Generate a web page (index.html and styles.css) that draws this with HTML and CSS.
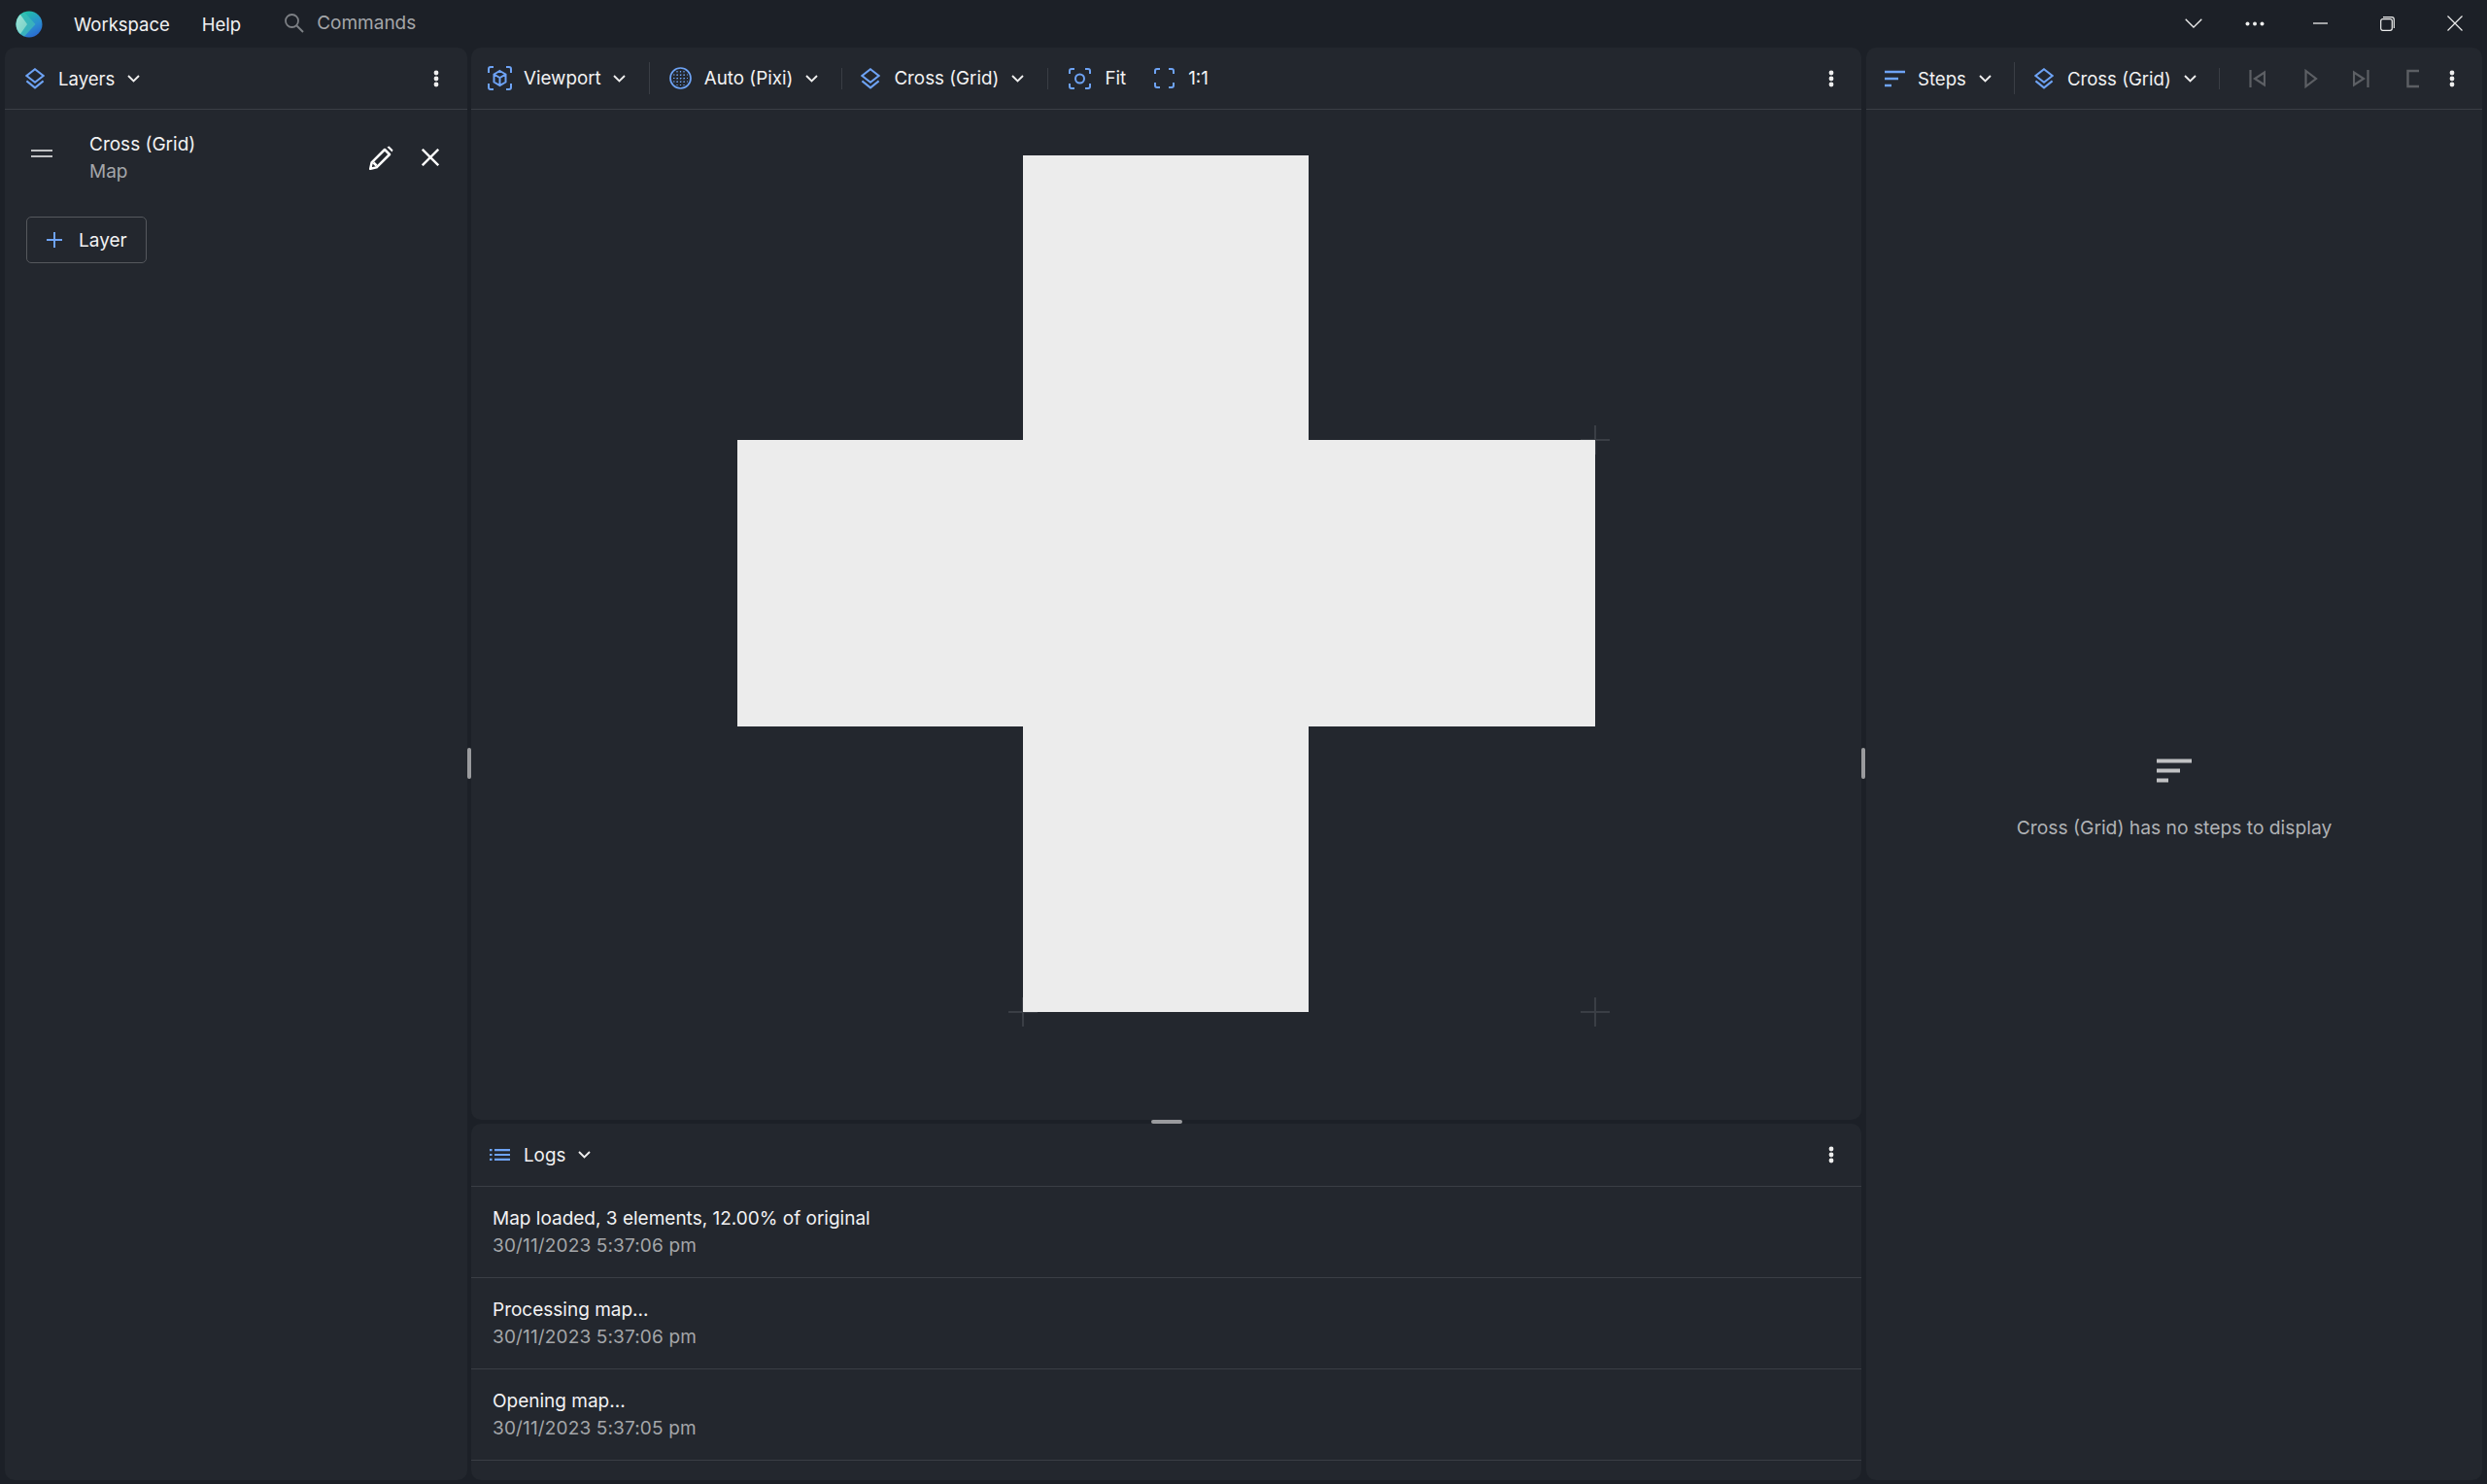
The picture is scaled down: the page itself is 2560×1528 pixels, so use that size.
FILE: index.html
```html
<!DOCTYPE html>
<html lang="en">

<head>
	<meta charset="UTF-8">
	<meta name="viewport" content="width=device-width, initial-scale=1.0">
	<title>Workspace</title>
	<link rel="stylesheet" href="styles.css">
</head>

<body>
	<svg class="defs" width="0" height="0">
		<defs>
			<symbol id="chev" viewBox="0 0 13 8"><path d="M1 1l5.500 5.500L12 1" fill="none" stroke="currentColor" stroke-width="1.900"/></symbol>
			<symbol id="kebab" viewBox="0 0 6 18"><circle cx="3" cy="3" r="2.400" fill="currentColor"/><circle cx="3" cy="9" r="2.400" fill="currentColor"/><circle cx="3" cy="15" r="2.400" fill="currentColor"/></symbol>
			<symbol id="layers" viewBox="0 0 20 22"><path d="M10 1.200L18.600 8 10 14.800 1.400 8z" fill="none" stroke="currentColor" stroke-width="2"/><path d="M1.400 13.400L10 20.400l8.600-7" fill="none" stroke="currentColor" stroke-width="2"/></symbol>
		</defs>
	</svg>

	<header class="titlebar">
		<svg class="logo" width="28" height="28" viewBox="0 0 28 28">
			<defs>
				<linearGradient id="logoBack" x1="0.3" y1="0" x2="0.9" y2="1"><stop offset="0" stop-color="#1fc4a4"/><stop offset="0.55" stop-color="#2a8fd0"/><stop offset="1" stop-color="#2a5fd0"/></linearGradient>
				<linearGradient id="logoMid" x1="0" y1="0" x2="1" y2="1"><stop offset="0" stop-color="#2fc6ae"/><stop offset="1" stop-color="#3fa6c4"/></linearGradient>
				<linearGradient id="logoFront" x1="0" y1="0" x2="1" y2="1"><stop offset="0" stop-color="#9fe3d6"/><stop offset="1" stop-color="#74d0c6"/></linearGradient>
			</defs>
			<circle cx="14" cy="14" r="13.500" fill="url(#logoBack)"/>
			<path d="M9 1.500L20.500 14 9 26.500A13.500 13.500 0 0 1 9 1.500z" fill="url(#logoMid)"/>
			<path d="M5 4L12 14 5 24A13.500 13.500 0 0 1 5 4z" fill="url(#logoFront)"/>
		</svg>
		<nav class="menu">
			<span>Workspace</span>
			<span>Help</span>
		</nav>
		<div class="search">
			<svg width="21" height="21" viewBox="0 0 21 21"><circle cx="8.500" cy="8.500" r="6.500" fill="none" stroke="currentColor" stroke-width="1.800"/><path d="M13.500 13.500L20 20" stroke="currentColor" stroke-width="2"/></svg>
			<span>Commands</span>
		</div>
		<div class="winctl">
			<svg class="w-chev" width="18" height="10" viewBox="0 0 18 10"><path d="M.7.700L9 9l8.300-8.300" fill="none" stroke="currentColor" stroke-width="1.300"/></svg>
			<svg class="w-dots" width="20" height="5" viewBox="0 0 20 5"><circle cx="2.500" cy="2.500" r="2" fill="currentColor"/><circle cx="10" cy="2.500" r="2" fill="currentColor"/><circle cx="17.500" cy="2.500" r="2" fill="currentColor"/></svg>
			<svg class="w-min" width="15" height="2" viewBox="0 0 15 2"><path d="M0 1h15" stroke="currentColor" stroke-width="1.300"/></svg>
			<svg class="w-max" width="15" height="15" viewBox="0 0 15 15"><rect x=".7" y="2.700" width="11.600" height="11.600" rx="2" fill="none" stroke="currentColor" stroke-width="1.200"/><path d="M3 .7h9a2.300 2.300 0 0 1 2.300 2.300v9" fill="none" stroke="currentColor" stroke-width="1.200"/></svg>
			<svg class="w-close" width="16" height="16" viewBox="0 0 16 16"><path d="M.5.500l15 15M15.500.5l-15 15" stroke="currentColor" stroke-width="1.200"/></svg>
		</div>
	</header>

	<main class="workspace">
		<section class="panel layers">
			<div class="panel-head">
				<div class="tool">
					<svg class="blue wide" width="20" height="22"><use href="#layers"/></svg>
					<span>Layers</span>
					<svg class="chev" width="13" height="8"><use href="#chev"/></svg>
				</div>
				<svg class="kebab" width="6" height="18"><use href="#kebab"/></svg>
			</div>
			<div class="layer-row">
				<svg class="grip" width="22" height="8" viewBox="0 0 22 8"><path d="M0 1h22M0 7h22" stroke="#c0c1c3" stroke-width="2"/></svg>
				<div class="layer-text">
					<div class="line">Cross (Grid)</div>
					<div class="line dim">Map</div>
				</div>
				<svg class="pencil" width="25" height="25" viewBox="0 0 25 25"><path d="M1.200 23.800l1.400-6.400L16 4l5 5L7.600 22.400z M4.500 17.500l3 3" fill="none" stroke="#fff" stroke-width="2.500" stroke-linejoin="round"/><path d="M18.500 1.500l2-1 4 4-1 2z" fill="#fff"/></svg>
				<svg class="close" width="18" height="18" viewBox="0 0 18 18"><path d="M.8.800l16.400 16.400M17.200.8L.8 17.200" stroke="#fff" stroke-width="2.400"/></svg>
			</div>
			<button class="add-layer" type="button">
				<svg width="16" height="16" viewBox="0 0 16 16"><path d="M8 0v16M0 8h16" stroke="#6ea3f5" stroke-width="2"/></svg>
				<span>Layer</span>
			</button>
		</section>

		<div class="center">
			<section class="panel viewport">
				<div class="panel-head">
					<div class="tool tight">
						<svg class="blue" width="25" height="25" viewBox="0 0 25 25" fill="none" stroke="currentColor" stroke-width="2"><path d="M1 7V3a2 2 0 0 1 2-2h3M19 1h3a2 2 0 0 1 2 2v4M24 18v4a2 2 0 0 1-2 2h-3M6 24H3a2 2 0 0 1-2-2v-4"/><path d="M12.500 5l6 3.500v8l-6 3.500-6-3.500v-8zM6.500 8.500l6 3.500 6-3.500M12.500 12v8"/></svg>
						<span>Viewport</span>
						<svg class="chev" width="13" height="8"><use href="#chev"/></svg>
					</div>
					<i class="sep tall"></i>
					<div class="tool">
						<svg class="blue" width="23" height="23" viewBox="0 0 23 23" fill="none" stroke="currentColor" stroke-width="1.700"><circle cx="11.500" cy="11.500" r="10.500"/><path d="M8 4v15M11.500 4v15M15 4v15M4 8h15M4 11.500h15M4 15h15" stroke-width="1.200" stroke-dasharray="1.500 2"/></svg>
						<span>Auto (Pixi)</span>
						<svg class="chev" width="13" height="8"><use href="#chev"/></svg>
					</div>
					<i class="sep"></i>
					<div class="tool">
						<svg class="blue wide" width="20" height="22"><use href="#layers"/></svg>
						<span>Cross (Grid)</span>
						<svg class="chev" width="13" height="8"><use href="#chev"/></svg>
					</div>
					<i class="sep"></i>
					<div class="tool fit">
						<svg class="blue wide" width="23" height="22" viewBox="0 0 23 22" fill="none" stroke="currentColor" stroke-width="2"><path d="M1 6V3a2 2 0 0 1 2-2h3M17 1h3a2 2 0 0 1 2 2v3M22 16v3a2 2 0 0 1-2 2h-3M6 21H3a2 2 0 0 1-2-2v-3"/><circle cx="11.500" cy="11" r="4.500"/></svg>
						<span>Fit</span>
					</div>
					<div class="tool actual">
						<svg class="blue wide" width="21" height="21" viewBox="0 0 21 21" fill="none" stroke="currentColor" stroke-width="2"><path d="M1 6V3a2 2 0 0 1 2-2h3M15 1h3a2 2 0 0 1 2 2v3M20 15v3a2 2 0 0 1-2 2h-3M6 20H3a2 2 0 0 1-2-2v-3"/></svg>
						<span>1:1</span>
					</div>
					<svg class="kebab" width="6" height="18"><use href="#kebab"/></svg>
				</div>
				<div class="canvas">
					<svg width="931" height="930" viewBox="0 0 931 930">
						<path d="M907 278v30M892 293h30M318 867v30M303 882h30M907 867v30M892 882h30" stroke="#3a3e45" stroke-width="2" fill="none"/>
						<path d="M318 0H612V293H907V588H612V882H318V588H24V293H318z" fill="#ececec"/>
					</svg>
				</div>
			</section>

			<section class="panel logs">
				<div class="panel-head">
					<div class="tool">
						<svg class="blue wide" width="21" height="12" viewBox="0 0 21 12"><path d="M5 1.200h16M5 6h16M5 10.800h16" stroke="currentColor" stroke-width="2.200"/><path d="M0 1.200h2.500M0 6h2.500M0 10.800h2.500" stroke="currentColor" stroke-width="2.200"/></svg>
						<span>Logs</span>
						<svg class="chev" width="13" height="8"><use href="#chev"/></svg>
					</div>
					<svg class="kebab" width="6" height="18"><use href="#kebab"/></svg>
				</div>
				<div class="log-row">
					<div class="line">Map loaded, 3 elements, 12.00% of original</div>
					<div class="line dim date">30/11/2023 5:37:06 pm</div>
				</div>
				<div class="log-row">
					<div class="line">Processing map...</div>
					<div class="line dim date">30/11/2023 5:37:06 pm</div>
				</div>
				<div class="log-row">
					<div class="line">Opening map...</div>
					<div class="line dim date">30/11/2023 5:37:05 pm</div>
				</div>
			</section>
		</div>

		<section class="panel steps">
			<div class="panel-head">
				<div class="tool">
					<svg class="blue" width="21" height="18" viewBox="0 0 21 18"><path d="M0 2h21M0 9h14M0 16h7" stroke="currentColor" stroke-width="2.600"/></svg>
					<span>Steps</span>
					<svg class="chev" width="13" height="8"><use href="#chev"/></svg>
				</div>
				<i class="sep tall"></i>
				<div class="tool">
					<svg class="blue wide" width="20" height="22"><use href="#layers"/></svg>
					<span>Cross (Grid)</span>
					<svg class="chev" width="13" height="8"><use href="#chev"/></svg>
				</div>
				<i class="sep"></i>
				<div class="media">
					<svg width="17" height="18" viewBox="0 0 17 18" fill="none" stroke="currentColor" stroke-width="2.200"><path d="M1.500 0v18M16 2.500v13L6 9z"/></svg>
					<svg class="m-play" width="14" height="20" viewBox="0 0 14 20" fill="none" stroke="currentColor" stroke-width="2.200"><path d="M1.500 2v16L12 10z"/></svg>
					<svg class="m-next" width="17" height="18" viewBox="0 0 17 18" fill="none" stroke="currentColor" stroke-width="2.200"><path d="M15.500 0v18M1 2.500v13L11 9z"/></svg>
					<svg class="m-stop" width="13" height="20" viewBox="0 0 13 20" fill="none" stroke="currentColor" stroke-width="2.400"><path d="M13 2H1.500v16H13"/></svg>
				</div>
				<svg class="kebab" width="6" height="18"><use href="#kebab"/></svg>
			</div>
			<div class="empty">
				<svg width="36" height="25" viewBox="0 0 36 25"><path d="M0 2.500h36M0 12.500h24M0 22.500h12" stroke="#c0c1c3" stroke-width="4"/></svg>
				<p>Cross (Grid) has no steps to display</p>
			</div>
		</section>

		<i class="handle handle-left"></i>
		<i class="handle handle-right"></i>
		<i class="handle handle-logs"></i>
	</main>
</body>

</html>
```

FILE: styles.css
```css
* {
	box-sizing: border-box;
}

html,
body {
	height: 100%;
}

body {
	margin: 0;
	display: flex;
	flex-direction: column;
	background-color: #1c2027;
	color: #f2f2f3;
	font-family: Inter, "Liberation Sans", sans-serif;
	font-size: 19px;
	overflow: hidden;
}

svg {
	display: block;
	flex: none;
}

.defs {
	position: absolute;
}

/* title bar */

.titlebar {
	height: 49px;
	flex: none;
	display: flex;
	align-items: center;
	padding-left: 16px;
}

.menu {
	display: flex;
	gap: 33px;
	margin-left: 32px;
	font-size: 18.5px;
}

.search {
	display: flex;
	align-items: center;
	gap: 13px;
	margin-left: 44px;
	margin-bottom: 2px;
	color: #7d8085;
}

.search span {
	color: #a4a6a9;
}

.winctl {
	margin-left: auto;
	display: flex;
	align-items: center;
	color: #eeeeee;
	padding-right: 25px;
	padding-bottom: 1px;
}

.w-dots {
	margin-left: 44px;
}

.w-min {
	margin-left: 50px;
}

.w-max {
	margin-left: 54px;
}

.w-close {
	margin-left: 54px;
}

/* panels */

.workspace {
	position: relative;
	flex: 1;
	min-height: 0;
	display: flex;
	gap: 4px;
	padding: 0 5px 4px;
}

.panel {
	background-color: #23272e;
	border-radius: 10px;
	display: flex;
	flex-direction: column;
	min-height: 0;
}

.layers {
	width: 476px;
	flex: none;
}

.center {
	width: 1431px;
	flex: none;
	display: flex;
	flex-direction: column;
	gap: 4px;
}

.steps {
	flex: 1;
	margin-left: 1px;
}

.panel-head {
	height: 64px;
	flex: none;
	display: flex;
	align-items: center;
	border-bottom: 1px solid #3a3e45;
	font-size: 18.8px;
	padding-left: 17px;
	padding-right: 28px;
}

.layers .panel-head {
	padding-left: 21px;
	padding-right: 29px;
	font-size: 18.6px;
}

.logs .panel-head {
	height: 65px;
	padding-left: 19px;
}

.steps .panel-head {
	padding-left: 19px;
	padding-right: 28px;
	font-size: 18.6px;
}

.tool {
	display: flex;
	align-items: center;
	gap: 13px;
}

.tool.tight {
	gap: 12px;
}

.blue {
	color: #6ea3f5;
}

.blue.wide {
	margin-right: 1px;
}

.chev {
	color: #eeeeee;
}

.kebab {
	margin-left: auto;
	color: #eeeeee;
}

.sep {
	width: 1px;
	height: 22px;
	margin: 0 19px 0 24px;
	background-color: #3a3e45;
}

.sep.tall {
	height: 33px;
	margin-right: 20px;
}

.steps .sep {
	margin: 0 20px 0 23px;
}

.fit {
	margin-left: 2px;
}

.actual {
	margin-left: 29px;
}

.line {
	line-height: 29px;
}

.dim {
	color: #a4a6a9;
}

.date {
	letter-spacing: 0.15px;
	margin-top: -1px;
}

/* layers panel */

.layer-row {
	display: flex;
	align-items: center;
	height: 94px;
	padding-left: 27px;
}

.grip {
	margin-top: -4px;
}

.layer-text {
	margin-left: 38px;
	margin-top: 5px;
}

.layer-text .line {
	line-height: 28px;
}

.pencil {
	margin-left: auto;
	margin-top: 5px;
}

.close {
	margin-left: 29px;
	margin-right: 29px;
	margin-top: 4px;
}

.add-layer {
	display: flex;
	align-items: center;
	gap: 17px;
	width: 124px;
	height: 48px;
	margin: 16px 0 0 22px;
	padding: 0 0 0 20px;
	background: none;
	border: 1px solid #55585d;
	border-radius: 5px;
	color: #f2f2f3;
	font: inherit;
}

/* viewport */

.viewport {
	flex: 1;
	min-height: 0;
}

.canvas {
	flex: 1;
	display: flex;
	justify-content: center;
	padding-top: 47px;
	overflow: hidden;
}

/* logs */

.logs {
	height: 367px;
	flex: none;
}

.log-row {
	height: 94px;
	flex: none;
	display: flex;
	flex-direction: column;
	justify-content: center;
	padding-left: 22px;
	border-bottom: 1px solid #3a3e45;
}

/* steps */

.media {
	display: flex;
	align-items: center;
	color: #5c5f64;
	margin-left: 10px;
}

.m-play {
	margin-left: 40px;
}

.m-next {
	margin-left: 36px;
}

.m-stop {
	margin-left: 38px;
}

.empty {
	flex: 1;
	display: flex;
	flex-direction: column;
	align-items: center;
	padding-top: 668px;
	color: #b0b2b5;
	font-size: 19.25px;
}

.empty p {
	margin: 34px 0 0;
}

/* resize handles lie over the gutters */

.handle {
	position: absolute;
	background-color: #9a9b9e;
	border-radius: 2px;
}

.handle-left,
.handle-right {
	top: 721px;
	width: 4px;
	height: 32px;
}

.handle-left {
	left: 481px;
}

.handle-right {
	left: 1916px;
}

.handle-logs {
	top: 1104px;
	left: 1185px;
	width: 32px;
	height: 4px;
}
```
